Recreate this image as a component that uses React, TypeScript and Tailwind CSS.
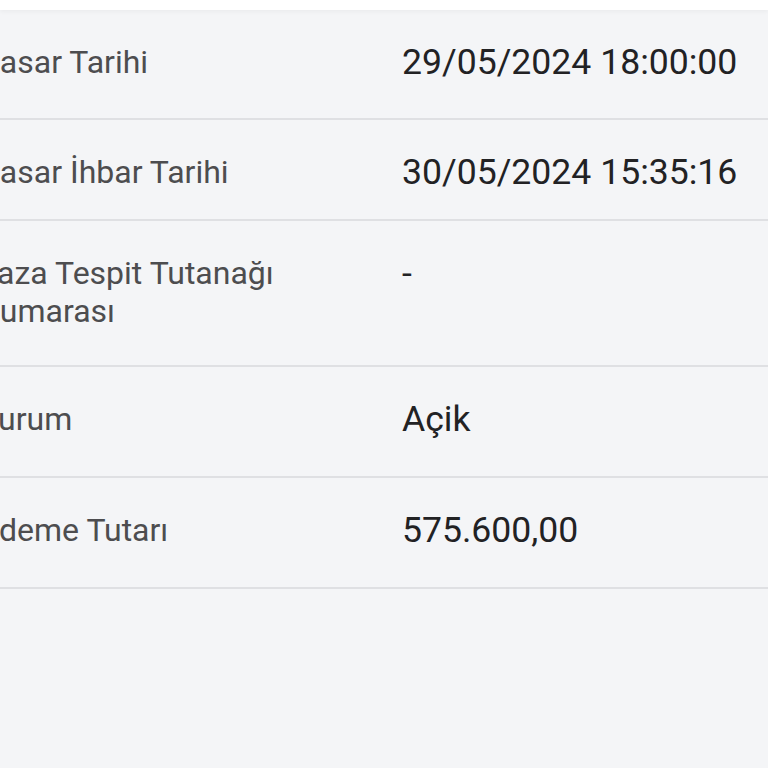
import React from 'react';

const ROWS = [
  { label: 'Hasar Tarihi', value: '29/05/2024 18:00:00', h: 'h-[110px]' },
  { label: 'Hasar İhbar Tarihi', value: '30/05/2024 15:35:16', h: 'h-[101px]' },
  { label: 'Kaza Tespit Tutanağı Numarası', value: '-', h: 'h-[146px]' },
  { label: 'Durum', value: 'Açik', h: 'h-[111px]' },
  { label: 'Ödeme Tutarı', value: '575.600,00', h: 'h-[111px]' },
];

const App: React.FC = () => {
  return (
    <div className="w-[768px] h-[768px] overflow-hidden bg-[#f4f5f7] font-['Roboto','Liberation_Sans',sans-serif]">
      {/* top app bar edge */}
      <div className="h-[10px] bg-white shadow-[0_2px_4px_rgba(0,0,0,0.04)]"></div>

      <div className="-ml-[23px]">
        {ROWS.map((row, i) => (
          <div
            key={i}
            className={`flex items-start pt-[33px] border-b-2 border-[#dfe0e3] ${row.h}`}
          >
            <div className="w-[330px] shrink-0 pr-4 text-[32px] leading-[38px] text-[#4d4d4f]">
              {row.label}
            </div>
            <div className="ml-[95px] text-[35.6px] leading-[38px] text-[#222224]">
              {row.value}
            </div>
          </div>
        ))}
      </div>
    </div>
  );
};

export default App;
